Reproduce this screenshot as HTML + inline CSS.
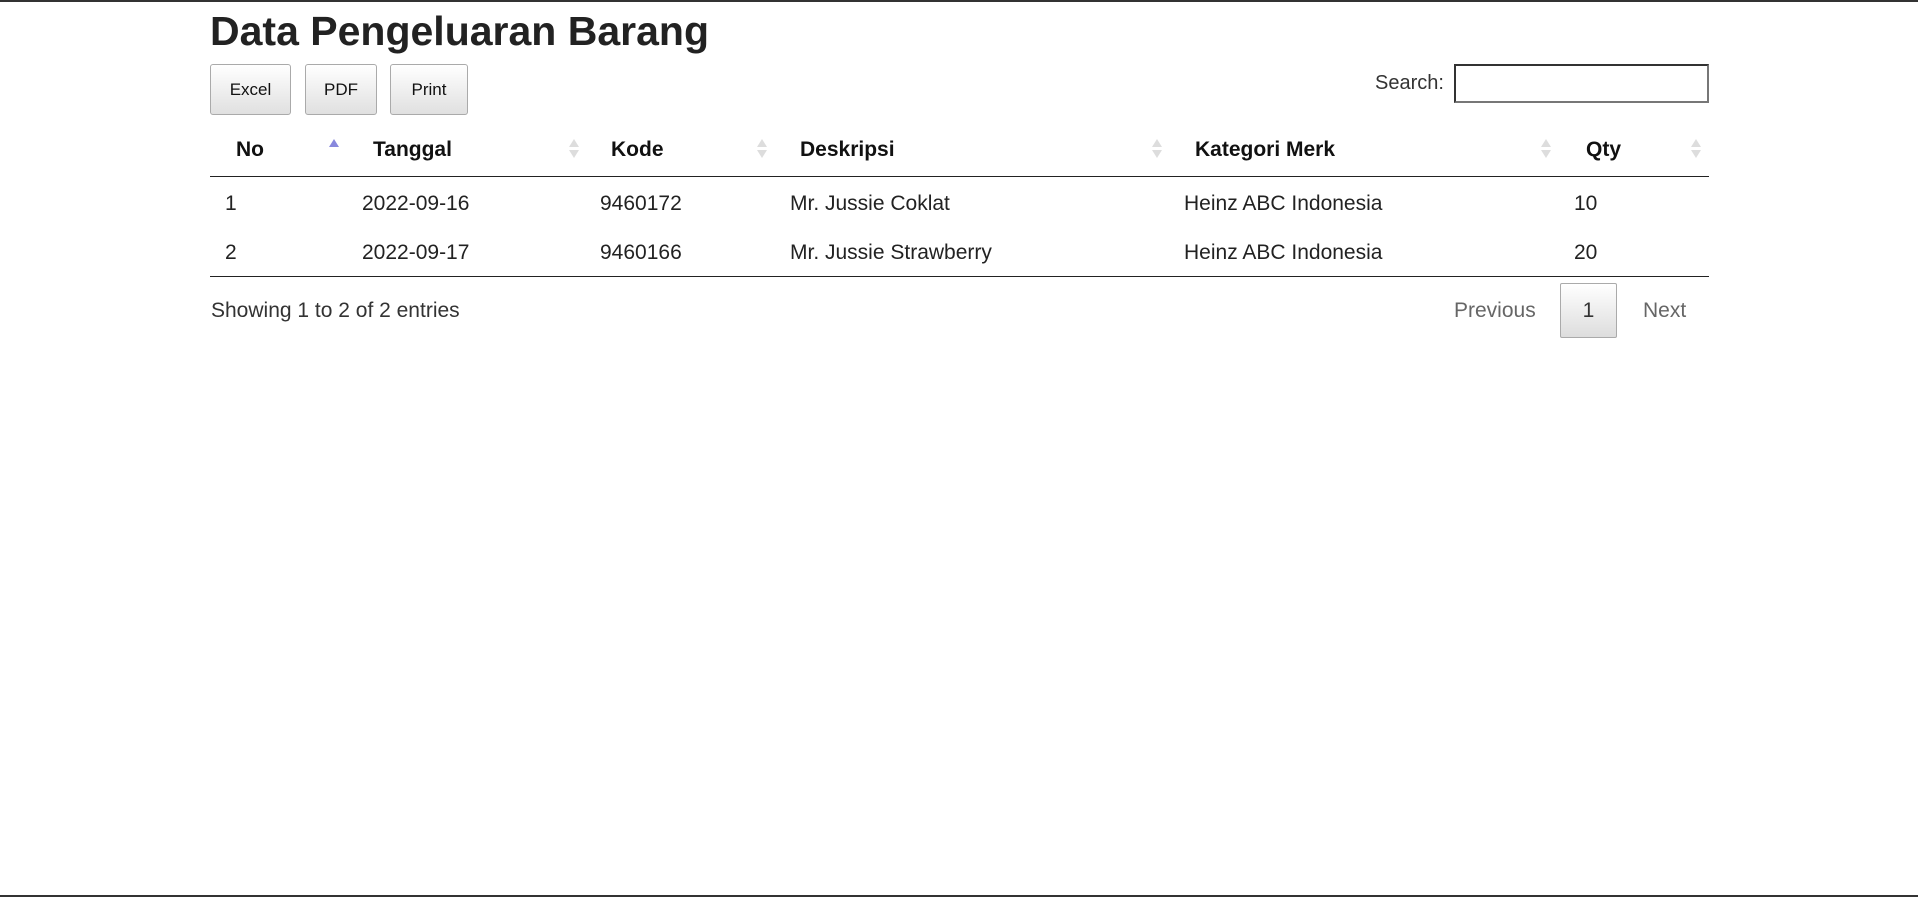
<!DOCTYPE html>
<html><head><meta charset="utf-8"><style>
*{margin:0;padding:0;box-sizing:border-box}
body{width:1918px;height:898px;background:#fff;font-family:"Liberation Sans",sans-serif;color:#222;position:relative;overflow:hidden}
.a{position:absolute;white-space:nowrap}
.btn{position:absolute;top:64px;height:51px;border:1px solid #aaa;border-radius:3px;background:linear-gradient(#fff,#e0e0e0);font-size:17px;color:#111;display:flex;align-items:center;justify-content:center}
.h{position:absolute;top:138px;font-size:21px;font-weight:bold;color:#111}
.d{position:absolute;font-size:21px;color:#222}
.up{position:absolute;top:139px;width:0;height:0;border-left:5px solid transparent;border-right:5px solid transparent;border-bottom:8px solid #ddd}
.dn{position:absolute;top:150px;width:0;height:0;border-left:5px solid transparent;border-right:5px solid transparent;border-top:8px solid #ddd}
</style></head><body>
<div class="a" style="left:0;top:0;width:1918px;height:2px;background:#333"></div>
<div class="a" style="left:0;top:895px;width:1918px;height:2px;background:#333"></div>
<div class="a" style="left:210px;top:8px;font-size:41px;font-weight:bold;color:#222">Data Pengeluaran Barang</div>
<div class="btn" style="left:210px;width:81px">Excel</div>
<div class="btn" style="left:305px;width:72px">PDF</div>
<div class="btn" style="left:390px;width:78px">Print</div>
<div class="a" style="left:1375px;top:72px;font-size:20px;color:#333">Search:</div>
<div class="a" style="left:1454px;top:64px;width:255px;height:39px;border:2px solid #333;border-right-color:#777;border-bottom-color:#777"></div>
<div class="h" style="left:236px">No</div>
<div class="h" style="left:373px">Tanggal</div>
<div class="h" style="left:611px">Kode</div>
<div class="h" style="left:800px">Deskripsi</div>
<div class="h" style="left:1195px">Kategori Merk</div>
<div class="h" style="left:1586px">Qty</div>
<div class="up" style="left:329px;border-bottom-color:#8888dd"></div>
<div class="up" style="left:569px"></div><div class="dn" style="left:569px"></div>
<div class="up" style="left:757px"></div><div class="dn" style="left:757px"></div>
<div class="up" style="left:1152px"></div><div class="dn" style="left:1152px"></div>
<div class="up" style="left:1541px"></div><div class="dn" style="left:1541px"></div>
<div class="up" style="left:1691px"></div><div class="dn" style="left:1691px"></div>
<div class="a" style="left:210px;top:176px;width:1499px;height:1px;background:#222"></div>
<div class="d" style="left:225px;top:192px">1</div>
<div class="d" style="left:362px;top:192px">2022-09-16</div>
<div class="d" style="left:600px;top:192px">9460172</div>
<div class="d" style="left:790px;top:192px">Mr. Jussie Coklat</div>
<div class="d" style="left:1184px;top:192px">Heinz ABC Indonesia</div>
<div class="d" style="left:1574px;top:192px">10</div>
<div class="d" style="left:225px;top:241px">2</div>
<div class="d" style="left:362px;top:241px">2022-09-17</div>
<div class="d" style="left:600px;top:241px">9460166</div>
<div class="d" style="left:790px;top:241px">Mr. Jussie Strawberry</div>
<div class="d" style="left:1184px;top:241px">Heinz ABC Indonesia</div>
<div class="d" style="left:1574px;top:241px">20</div>
<div class="a" style="left:210px;top:276px;width:1499px;height:1px;background:#222"></div>
<div class="d" style="left:211px;top:299px;color:#333">Showing 1 to 2 of 2 entries</div>
<div class="d" style="left:1454px;top:299px;color:#666">Previous</div>
<div class="a" style="left:1560px;top:283px;width:57px;height:55px;border:1px solid #aaa;border-radius:2px;background:linear-gradient(#fff,#ddd);font-size:21px;display:flex;align-items:center;justify-content:center;color:#333">1</div>
<div class="d" style="left:1643px;top:299px;color:#666">Next</div>
</body></html>
